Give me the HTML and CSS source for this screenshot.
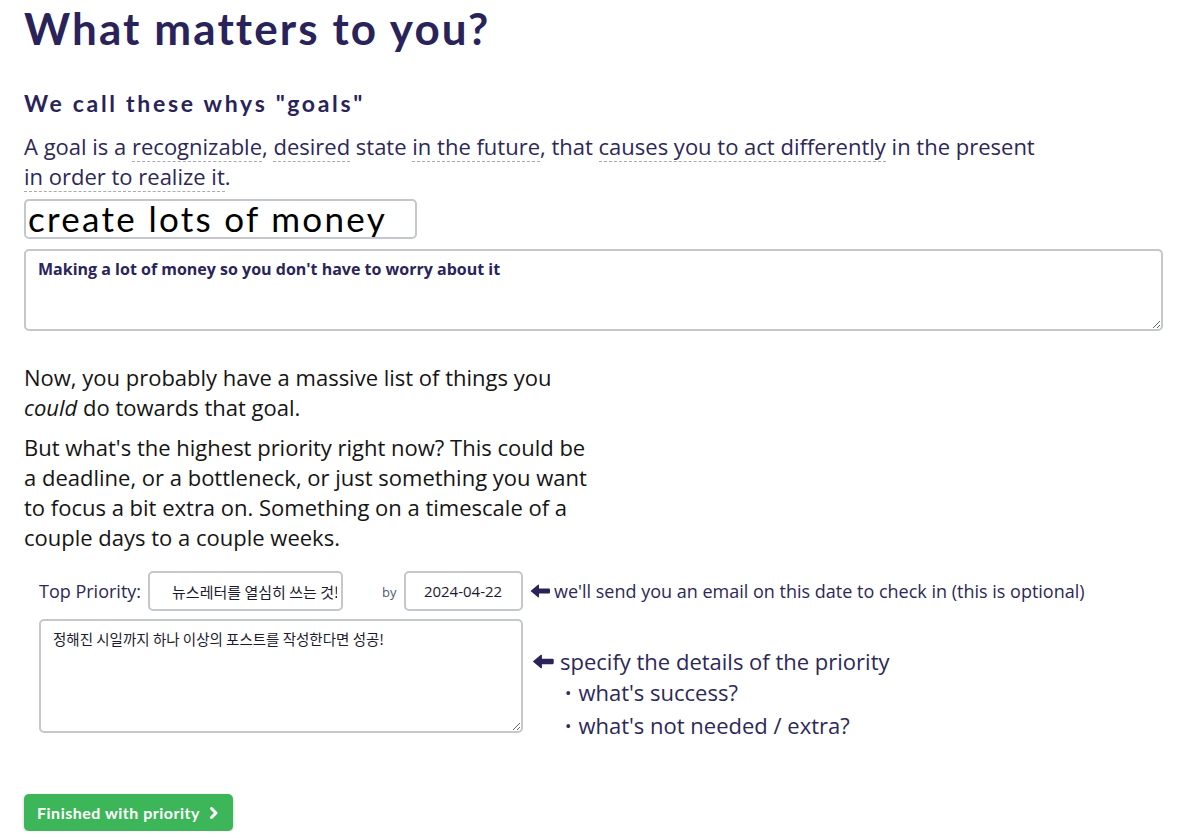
FILE: index.html
```html
<!DOCTYPE html>
<html lang="en">
<head>
<meta charset="utf-8">
<title>What matters to you?</title>
<link rel="stylesheet" href="styles.css">
</head>
<body>
<main class="page">
  <h1 class="title">What matters to you?</h1>
  <h2 class="subtitle">We call these whys "goals"</h2>
  <p class="definition">A goal is a <span class="term">recognizable</span>, <span class="term">desired</span> state <span class="term">in the future</span>, that <span class="term">causes you to act differently</span> in the present <span class="term">in order to realize it</span>.</p>
  <input class="goal-name" type="text" value="create lots of money">
  <textarea class="goal-desc">Making a lot of money so you don't have to worry about it</textarea>

  <div class="intro">
    <p>Now, you probably have a massive list of things you <em>could</em> do towards that goal.</p>
    <p>But what's the highest priority right now? This could be a deadline, or a bottleneck, or just something you want to focus a bit extra on. Something on a timescale of a couple days to a couple weeks.</p>
  </div>

  <section class="priority">
    <div class="priority-row">
      <label class="priority-label">Top Priority:</label>
      <input class="priority-name" type="text" value="뉴스레터를 열심히 쓰는 것!">
      <span class="by">by</span>
      <input class="priority-date" type="text" value="2024-04-22">
    </div>
    <div class="hint hint-date">
      <svg class="arrow" width="20" height="14" viewBox="0 0 20 14"><path d="M0.5 7 L8 0.8 Q9 0.2 9 1.5 L9 4.5 L19 4.5 Q20 4.5 20 5.5 L20 8.5 Q20 9.5 19 9.5 L9 9.5 L9 12.5 Q9 13.8 8 13.2 Z"/></svg>
      <span>we'll send you an email on this date to check in (this is optional)</span>
    </div>
    <textarea class="priority-desc">정해진 시일까지 하나 이상의 포스트를 작성한다면 성공!</textarea>
    <div class="hint hint-details">
      <div class="hint-head">
        <svg class="arrow" width="22" height="15" viewBox="0 0 20 14"><path d="M0.5 7 L8 0.8 Q9 0.2 9 1.5 L9 4.5 L19 4.5 Q20 4.5 20 5.5 L20 8.5 Q20 9.5 19 9.5 L9 9.5 L9 12.5 Q9 13.8 8 13.2 Z"/></svg>
        <span>specify the details of the priority</span>
      </div>
      <ul class="hint-list">
        <li>what's success?</li>
        <li>what's not needed / extra?</li>
      </ul>
    </div>
  </section>

  <button class="finish" type="button">Finished with priority
    <svg class="chevron" width="10" height="12" viewBox="0 0 10 12"><path d="M2.5 1.5 L7 6 L2.5 10.5" fill="none" stroke="#fff" stroke-width="3" stroke-linecap="round" stroke-linejoin="round"/></svg>
  </button>
</main>
</body>
</html>
```

FILE: styles.css
```css
html, body {
  margin: 0;
  padding: 0;
  background: #ffffff;
}

body {
  font-family: "Open Sans", "Noto Sans CJK KR", sans-serif;
  color: #29245a;
}

.page {
  padding: 0 24px;
}

.title {
  font-family: "Lato", sans-serif;
  font-weight: 700;
  font-size: 44px;
  line-height: 50px;
  margin: 3px 0 0;
  color: #29235a;
  letter-spacing: 2.1px;
}

.subtitle {
  font-family: "Lato", sans-serif;
  font-weight: 700;
  font-size: 23px;
  line-height: 26px;
  margin: 37px 0 0;
  color: #29235a;
  letter-spacing: 2.7px;
}

.definition {
  font-size: 22px;
  line-height: 30px;
  margin: 15px 0 0;
  max-width: 1020px;
  color: #2d2858;
}

.term {
  border-bottom: 1px dashed #a9a9b4;
}

.goal-name {
  display: block;
  box-sizing: border-box;
  width: 393px;
  height: 40px;
  margin: 8px 0 0;
  padding: 0 2px 2px;
  border: 2px solid #c4c7cb;
  border-radius: 5px;
  font-family: "Lato", sans-serif;
  font-size: 35px;
  line-height: 34px;
  letter-spacing: 2.3px;
  color: #000;
  background: #fff;
  outline: none;
}

.goal-desc {
  display: block;
  box-sizing: border-box;
  width: 1139px;
  height: 82px;
  margin: 10px 0 0;
  padding: 7px 12px;
  border: 2px solid #c4c7cb;
  border-radius: 5px;
  font-family: "Open Sans", sans-serif;
  font-weight: 700;
  font-size: 16px;
  line-height: 22px;
  color: #29245a;
  background: #fff;
}

.intro {
  margin-top: 31px;
  max-width: 566px;
  color: #151515;
}

.intro p {
  margin: 0;
  font-size: 22px;
  line-height: 30px;
}

.intro p + p {
  margin-top: 10px;
}

.priority {
  display: grid;
  grid-template-columns: 484px 1fr;
  align-items: start;
  column-gap: 7px;
  row-gap: 8px;
  margin: 19px 0 0 15px;
}

.priority-row {
  display: flex;
  align-items: center;
  height: 40px;
}

.priority-label {
  flex: none;
  white-space: nowrap;
  font-size: 18px;
  color: #2d2858;
  margin-right: 7px;
}

.priority-name,
.priority-date,
.priority-desc {
  flex: none;
  box-sizing: border-box;
  border: 2px solid #c4c7cb;
  border-radius: 5px;
  background: #fff;
  color: #1c1a2e;
  font-family: "Noto Sans CJK KR", "Open Sans", sans-serif;
}

.priority-name {
  width: 195px;
  height: 40px;
  padding: 0 4px 0 22px;
  font-size: 15px;
}

.by {
  flex: none;
  font-size: 13px;
  color: #5a5870;
  margin: 2px 7px 0 39px;
}

.priority-date {
  width: 119px;
  height: 40px;
  padding: 0;
  text-align: center;
  font-family: "Open Sans", sans-serif;
  font-size: 15px;
}

.priority-desc {
  display: block;
  width: 484px;
  height: 114px;
  padding: 8px 12px;
  font-size: 14.5px;
  line-height: 20px;
}

.hint {
  color: #2d2858;
}

.hint .arrow {
  fill: #29235a;
  flex: none;
}

.hint-date {
  display: flex;
  align-items: center;
  height: 40px;
  gap: 4px;
  font-size: 18px;
  white-space: nowrap;
}

.hint-details {
  padding-top: 27px;
  font-size: 22px;
  line-height: 31px;
}

.hint-head {
  display: flex;
  align-items: center;
  gap: 6px;
  margin-left: 2px;
}

.hint-list {
  list-style: none;
  margin: 0;
  padding: 0 0 0 35px;
}

.hint-list li::before {
  content: "•";
  font-family: "Open Sans", sans-serif;
  font-size: 17px;
  margin-right: 7px;
  position: relative;
  top: -2px;
}

.finish {
  display: flex;
  align-items: center;
  gap: 9px;
  width: max-content;
  margin-top: 51px;
  height: 37px;
  padding: 0 14px 0 13px;
  border: none;
  border-radius: 5px;
  background: #3db65a;
  box-shadow: 0 1px 3px rgba(0, 0, 0, 0.25);
  color: #ffffff;
  font-family: "Lato", sans-serif;
  font-weight: 700;
  font-size: 16px;
  letter-spacing: 0.5px;
  cursor: pointer;
}
```
